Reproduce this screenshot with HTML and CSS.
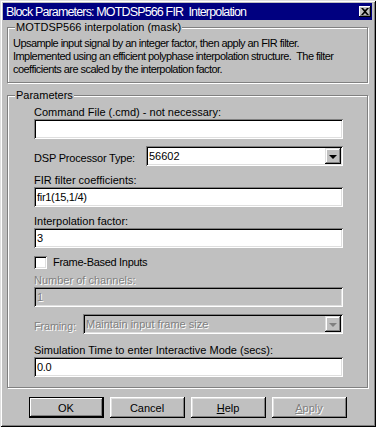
FILE: index.html
```html
<!doctype html>
<html lang="en">
<head>
    <meta charset="UTF-8" />
    <title>Block Parameters: MOTDSP566 FIR  Interpolation</title>
    <link rel="stylesheet" href="styles.css">
</head>
<body>
    <div class="window">
        <div class="titlebar">
            <span class="title">Block Parameters: MOTDSP566 FIR&nbsp; Interpolation</span>
            <span class="close">
                <svg width="8" height="7" viewBox="0 0 8 7"><path d="M0 0h2l2 2 2-2h2L5 3.5 8 7H6L4 5 2 7H0l3-3.5z" fill="#000"/></svg>
            </span>
        </div>

        <div class="group mask">
            <span class="legend">MOTDSP566 interpolation (mask)</span>
            <p class="desc">Upsample input signal by an integer factor, then apply an FIR filter.<br>Implemented using an efficient polyphase interpolation structure.&nbsp; The filter<br>coefficients are scaled by the interpolation factor.</p>
        </div>

        <div class="group params">
            <span class="legend">Parameters</span>

            <div class="label first">Command File (.cmd) - not necessary:</div>
            <div class="field"></div>

            <div class="row">
                <span class="row-label">DSP Processor Type:</span>
                <div class="select">
                    <span class="select-text">56602</span>
                    <span class="drop"><span class="arrow"></span></span>
                </div>
            </div>

            <div class="label">FIR filter coefficients:</div>
            <div class="field">fir1(15,1/4)</div>

            <div class="label">Interpolation factor:</div>
            <div class="field">3</div>

            <div class="check-row">
                <span class="checkbox"></span>
                <span>Frame-Based Inputs</span>
            </div>

            <div class="label disabled channels">Number of channels:</div>
            <div class="field off"><span class="disabled">1</span></div>

            <div class="row">
                <span class="row-label disabled framing">Framing:</span>
                <div class="select off">
                    <span class="select-text disabled">Maintain input frame size</span>
                    <span class="drop"><span class="arrow grey"></span></span>
                </div>
            </div>

            <div class="label sim">Simulation Time to enter Interactive Mode (secs):</div>
            <div class="field">0.0</div>
        </div>

        <div class="buttons">
            <button class="btn default">OK</button>
            <button class="btn">Cancel</button>
            <button class="btn"><u>H</u>elp</button>
            <button class="btn"><span class="disabled"><u>A</u>pply</span></button>
        </div>
    </div>
</body>
</html>
```

FILE: styles.css
```css
body {
    margin: 0;
    font-family: "Liberation Sans", Arial, sans-serif;
    font-size: 11px;
    color: #000;
    background: #c0c0c0;
}
.window {
    width: 376px;
    height: 427px;
    box-sizing: border-box;
    padding: 3px 4px 4px 3px;
    background: #c0c0c0;
    box-shadow: inset 1px 1px #dfdfdf, inset -1px -1px #000, inset 2px 2px #fff, inset -2px -2px #808080;
}
.titlebar {
    height: 17px;
    background: #000080;
    color: #fff;
    display: flex;
    align-items: center;
    justify-content: space-between;
    padding: 0 1px 0 3px;
}
.title {
    font-size: 12.5px;
    letter-spacing: -0.85px;
    white-space: pre;
}
.close {
    width: 12px;
    height: 11px;
    background: #c0c0c0;
    box-shadow: inset -1px -1px #000, inset 1px 1px #fff, inset -2px -2px #808080;
    display: flex;
    align-items: center;
    justify-content: center;
}

/* etched group boxes */
.group {
    position: relative;
    border: 1px solid #808080;
    box-shadow: inset 1px 1px #fff, 1px 1px #fff;
}
.legend {
    position: absolute;
    top: -8px;
    left: 7px;
    padding: 0 1px;
    background: #c0c0c0;
    line-height: 14px;
}
.mask {
    margin: 7px 4px 0 4px;
    padding: 9px 6px 6px 5px;
}
.desc {
    margin: 0;
    line-height: 13px;
    white-space: nowrap;
    letter-spacing: -0.55px;
}
.params {
    margin: 12px 4px 0 4px;
    padding: 9px 24px 10px 26px;
}

.label {
    line-height: 14px;
    margin-top: 7px;
}
.label.first { margin-top: 0; }
.label.channels { margin-top: 4px; }
.label.sim { margin-top: 9px; }

.field {
    height: 20px;
    box-sizing: border-box;
    background: #fff;
    padding: 3px 3px 0 3px;
    line-height: 14px;
    letter-spacing: -0.3px;
    box-shadow: inset 1px 1px #808080, inset -1px -1px #fff, inset 2px 2px #000, inset -2px -2px #dfdfdf;
}
.field.off { background: #c0c0c0; }

.row {
    display: flex;
    align-items: center;
    margin-top: 7px;
}
.row-label {
    width: 112px;
    padding-top: 3px;
    letter-spacing: -0.2px;
}
.row-label.framing { width: 49px; }
.select {
    flex: 1;
    height: 20px;
    box-sizing: border-box;
    background: #fff;
    display: flex;
    align-items: center;
    justify-content: space-between;
    padding: 2px;
    box-shadow: inset 1px 1px #808080, inset -1px -1px #fff, inset 2px 2px #000, inset -2px -2px #dfdfdf;
}
.select.off { background: #c0c0c0; }
.select-text {
    padding-left: 1px;
}
.drop {
    width: 16px;
    height: 16px;
    background: #c0c0c0;
    box-shadow: inset -1px -1px #000, inset 1px 1px #dfdfdf, inset -2px -2px #808080, inset 2px 2px #fff;
    display: flex;
    align-items: center;
    justify-content: center;
}
.arrow {
    width: 0;
    height: 0;
    border-left: 4px solid transparent;
    border-right: 4px solid transparent;
    border-top: 4px solid #000;
    margin-top: 1px;
}
.arrow.grey {
    border-top-color: #808080;
}

.check-row {
    display: flex;
    align-items: center;
    gap: 6px;
    height: 14px;
    margin-top: 7px;
    letter-spacing: -0.3px;
}
.checkbox {
    width: 13px;
    height: 13px;
    box-sizing: border-box;
    background: #fff;
    box-shadow: inset 1px 1px #808080, inset -1px -1px #fff, inset 2px 2px #000, inset -2px -2px #dfdfdf;
}

.disabled {
    color: #808080;
    text-shadow: 1px 1px #fff;
}

.buttons {
    display: flex;
    justify-content: center;
    gap: 6px;
    margin-top: 9px;
}
.btn {
    width: 75px;
    height: 21px;
    padding: 0;
    border: none;
    background: #c0c0c0;
    font-family: "Liberation Sans", Arial, sans-serif;
    font-size: 11px;
    color: #000;
    box-shadow: inset -1px -1px #000, inset 1px 1px #fff, inset -2px -2px #808080, inset 2px 2px #dfdfdf;
}
.btn.default {
    box-shadow: inset 0 0 0 1px #000, inset -2px -2px #000, inset 2px 2px #fff, inset -3px -3px #808080;
}
```
